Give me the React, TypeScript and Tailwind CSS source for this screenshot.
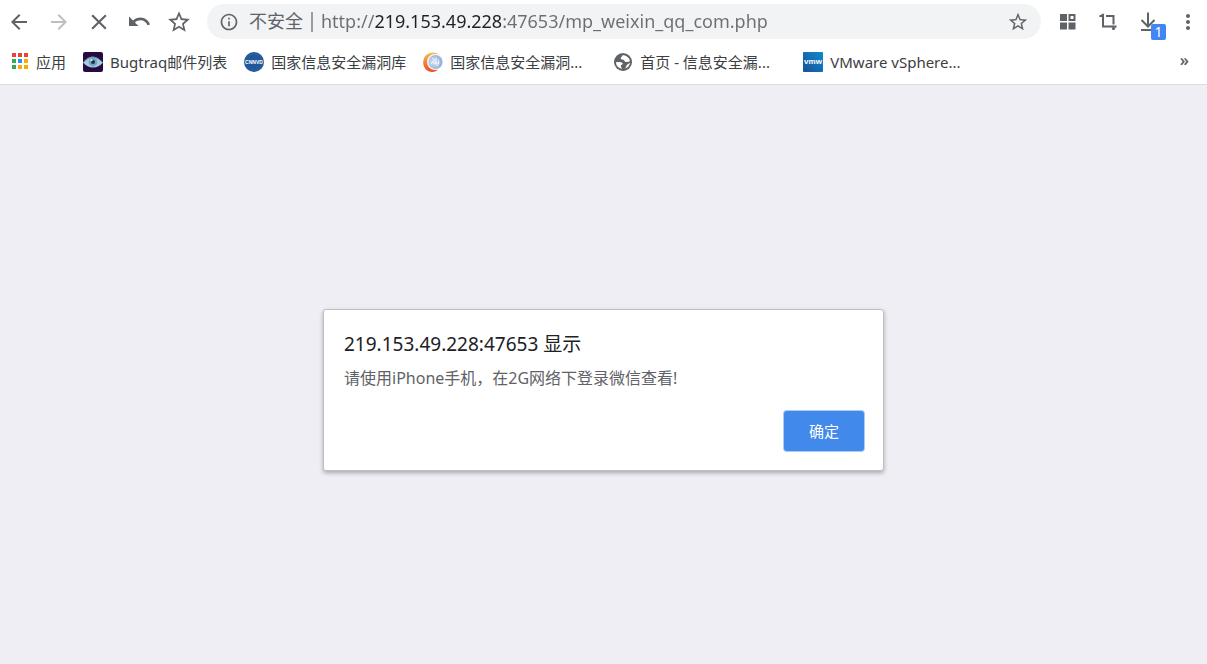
import React, { useState } from 'react';
import {
  MdArrowBack,
  MdArrowForward,
  MdClose,
  MdInfoOutline,
  MdMoreVert,
  MdStarBorder,
} from 'react-icons/md';

interface Bookmark {
  title: string;
  icon: React.ReactNode;
  wide?: boolean;
}

const APP_COLORS = ['#ea4335', '#ea4335', '#ea4335', '#34a853', '#2196f3', '#fbaa05', '#34a853', '#fbaa05', '#fbaa05'];

const AppsIcon = () => (
  <svg width="20" height="20" viewBox="0 0 20 20">
    {APP_COLORS.map((color, i) => (
      <rect key={i} x={2 + (i % 3) * 6} y={1 + Math.floor(i / 3) * 6} width="4" height="4" fill={color} />
    ))}
  </svg>
);

const EyeIcon = () => (
  <svg width="20" height="20" viewBox="0 0 20 20">
    <rect width="20" height="20" rx="2" fill="#260b42" />
    <path d="M0 10.5C4 5.5 7 4.5 10.5 4.8c3.500 .3 6 2.400 9.500 5.700-3 3.500-6 5-10 5S3 14 0 10.500z" fill="#a9cbd9" />
    <path d="M1 9.800C5 5.800 8 5 10.500 5.200c3 .2 5.500 1.800 8.500 4.600" fill="none" stroke="#5c8296" strokeWidth="1" />
    <circle cx="10" cy="10" r="4.400" fill="#6fa5be" />
    <circle cx="10" cy="10" r="2" fill="#163445" />
    <circle cx="8.500" cy="8.300" r="1" fill="#eef8fb" />
  </svg>
);

const CnnvdIcon = () => (
  <svg width="20" height="20" viewBox="0 0 20 20">
    <circle cx="10" cy="10" r="10" fill="#1f5799" />
    <circle cx="10" cy="10" r="8" fill="none" stroke="#3d70aa" strokeWidth="1" strokeDasharray="1 1" />
    <text x="10" y="12" textAnchor="middle" fontSize="5" fontWeight="700" fill="#fff" fontFamily="Liberation Sans, sans-serif">CNNVD</text>
  </svg>
);

const SwirlIcon = () => (
  <svg width="20" height="20" viewBox="0 0 20 20">
    <defs>
      <linearGradient id="swirl" x1="0" y1="0" x2="0" y2="1">
        <stop offset="0" stopColor="#f9c04a" />
        <stop offset="1" stopColor="#e94e24" />
      </linearGradient>
      <radialGradient id="globe" cx=".35" cy=".5" r=".7">
        <stop offset="0" stopColor="#d3deef" />
        <stop offset="1" stopColor="#8aa8d4" />
      </radialGradient>
    </defs>
    <path d="M17 3.500C13-1 5-.5 1.500 5-1 10 0 16 5 19c4 1.800 8 1 10-1.500C7 18 2 8 9 3c3-1.500 6-1 8 .5z" fill="url(#swirl)" />
    <circle cx="12" cy="10" r="8" fill="#f4f6fb" />
    <circle cx="12.500" cy="10" r="7" fill="url(#globe)" />
    <path d="M9 6.500c2 0 3 1 2 2.500s-3 1-2.500 3M13 5.500v8M10 11h6M15 7.500c1.500 2 1 5-1 6.500" fill="none" stroke="#f7f9fd" strokeWidth="1" />
  </svg>
);

const GlobeIcon = () => (
  <svg width="20" height="20" viewBox="0 0 20 20">
    <circle cx="10" cy="10" r="9" fill="#5f6368" />
    <path d="M3 10.300c2-.5 5-.6 6.300.4 1.200 1-.1 2-1.300 2.200-.6 1.500.4 2 1 3.800C5.500 16.300 3 13.800 3 10.300z" fill="#fff" />
    <path d="M9.500 3.200C13 3 16.500 5.500 17 9c-1.300.9-3.200 1.400-4.700.8-1.300-.6-.5-1.600-2-2C8.700 7.500 7.500 7.300 7.700 6c.1-1 1.300-1 1.800-2.800z" fill="#fff" />
    <path d="M17 10.500c-.3 3-2.200 5.500-5.300 6.200 1.700-1.300 1.100-2.300 2-3.500.8-1.100 2.200-1.500 3.300-2.700z" fill="#fff" />
  </svg>
);

const VmwareIcon = () => (
  <svg width="20" height="20" viewBox="0 0 20 20">
    <defs>
      <linearGradient id="vmw" x1="1" y1="0" x2="0" y2="1">
        <stop offset="0" stopColor="#0a8ccf" />
        <stop offset="1" stopColor="#1c4f96" />
      </linearGradient>
    </defs>
    <rect width="20" height="20" rx="1" fill="url(#vmw)" />
    <text x="10" y="12" textAnchor="middle" fontSize="8" fontWeight="700" fill="#fff" fontFamily="Liberation Sans, sans-serif">vmw</text>
  </svg>
);

const UndoIcon = () => (
  <svg width="24" height="24" viewBox="0 0 24 24" fill="currentColor">
    <path d="M2 6.500v9.500h9.500l-3.600-3.600C9.400 11 11.300 10.200 13.500 10.200c3.400 0 6 2.100 7 5l2.500-.8C21.700 10.400 18 7.500 13.500 7.500c-2.900 0-5.500 1.100-7.500 2.900z" />
  </svg>
);

const TilesIcon = () => (
  <svg width="24" height="24" viewBox="0 0 24 24" fill="currentColor">
    <path d="M4 4h7v7H4zM4 12.500h7v7H4zM12.500 12.500h7v7h-7z" />
    <path d="M12.500 4h7v7h-7zM14.500 6v3h3V6z" fillRule="evenodd" />
  </svg>
);

const CropIcon = () => (
  <svg width="24" height="24" viewBox="0 0 24 24" fill="none" stroke="currentColor" strokeWidth="2">
    <path d="M7 4v12.500h13.500M3.500 6H7M10 6h7.500v8.500M17.500 16v4" />
    <path d="M4 6.500l3-3M16 17.500l1.500 2.500 2-2.500" strokeWidth="1" />
  </svg>
);

const DownloadIcon = () => (
  <svg width="24" height="24" viewBox="0 0 24 24" fill="none" stroke="currentColor" strokeWidth="2">
    <path d="M12 2.500V16M5.500 10l6.500 6.500 6.500-6.500M5 20h14" />
  </svg>
);

const BOOKMARKS: Bookmark[] = [
  { title: 'Bugtraq邮件列表', icon: <EyeIcon /> },
  { title: '国家信息安全漏洞库', icon: <CnnvdIcon /> },
  { title: '国家信息安全漏洞...', icon: <SwirlIcon />, wide: true },
  { title: '首页 - 信息安全漏...', icon: <GlobeIcon />, wide: true },
  { title: 'VMware vSphere...', icon: <VmwareIcon />, wide: true },
];

interface ToolButtonProps {
  label: string;
  disabled?: boolean;
  children: React.ReactNode;
}

const ToolButton: React.FC<ToolButtonProps> = ({ label, disabled, children }) => (
  <button
    aria-label={label}
    disabled={disabled}
    className="relative flex h-9 w-[38px] shrink-0 items-center justify-center text-[#5f6368] disabled:text-[#bdbfc1]"
  >
    {children}
  </button>
);

const Toolbar = () => {
  const [url, setUrl] = useState('http://219.153.49.228:47653/mp_weixin_qq_com.php');

  return (
    <div className="flex h-[43px] items-center">
      <div className="flex gap-0.5">
        <ToolButton label="后退"><MdArrowBack size={24} /></ToolButton>
        <ToolButton label="前进" disabled><MdArrowForward size={24} /></ToolButton>
        <ToolButton label="停止"><MdClose size={26} /></ToolButton>
        <ToolButton label="撤销"><UndoIcon /></ToolButton>
        <ToolButton label="收藏"><MdStarBorder size={26} /></ToolButton>
      </div>

      <div className="ml-[9px] mr-2 flex h-[35px] min-w-0 flex-1 items-center rounded-full bg-[#f1f3f4] pl-3 pr-3 text-[#5f6368]">
        <MdInfoOutline size={20} className="shrink-0" />
        <label htmlFor="address" className="ml-2.5 shrink-0 text-[18px]">不安全</label>
        <span className="mx-2 h-5 w-0.5 shrink-0 bg-[#9a9da0]" />
        <input
          id="address"
          type="text"
          value={url}
          onChange={(e) => setUrl(e.target.value)}
          className="min-w-0 flex-1 bg-[linear-gradient(90deg,#6b6f73_54px,#202124_54px,#202124_182px,#6b6f73_182px)] bg-clip-text text-[18px] text-transparent outline-none"
        />
        <button aria-label="为此网页添加书签" className="shrink-0"><MdStarBorder size={22} /></button>
      </div>

      <div className="flex gap-0.5">
        <ToolButton label="扩展程序"><TilesIcon /></ToolButton>
        <ToolButton label="截图"><CropIcon /></ToolButton>
        <ToolButton label="下载">
          <DownloadIcon />
          <span className="absolute bottom-0 right-px flex h-4 w-[15px] items-center justify-center rounded-xs bg-[#4285f4] text-sm text-white">1</span>
        </ToolButton>
        <ToolButton label="菜单"><MdMoreVert size={24} /></ToolButton>
      </div>
    </div>
  );
};

const BookmarkBar = () => (
  <nav className="flex h-[38px] items-center gap-[17px] pl-2.5 pr-[18px] text-[15px] text-[#3c4043]">
    <a href="#apps" className="flex shrink-0 items-center gap-1.5">
      <AppsIcon />
      应用
    </a>
    {BOOKMARKS.map((bookmark) => (
      <a key={bookmark.title} href="#bookmark" className="flex shrink-0 items-center gap-[7px] whitespace-nowrap">
        {bookmark.icon}
        <span className={bookmark.wide ? 'w-[146px]' : ''}>{bookmark.title}</span>
      </a>
    ))}
    <button aria-label="更多书签" className="ml-auto pb-1 text-base font-semibold text-[#5f6368]">»</button>
  </nav>
);

const App: React.FC = () => {
  const [isOpen, setIsOpen] = useState(true);

  return (
    <div className="flex min-h-screen flex-col bg-[#efeef5] font-['Noto_Sans','Noto_Sans_CJK_SC',sans-serif]">
      <header className="border-b border-[#dadce0] bg-white pb-[3px]">
        <Toolbar />
        <BookmarkBar />
      </header>

      <main className="flex flex-1 items-start justify-center pt-56">
        {isOpen && (
          <div
            role="alertdialog"
            aria-labelledby="alert-title"
            aria-describedby="alert-text"
            className="flex w-full max-w-[561px] flex-col rounded-[3px] border border-[#bfbfc4] bg-white pb-[19px] pl-5 pr-[19px] pt-5 shadow-[0_2px_4px_rgba(0,0,0,0.3)]"
          >
            <h1 id="alert-title" className="text-[19px] leading-7 text-[#202124]">219.153.49.228:47653 显示</h1>
            <p id="alert-text" className="mt-2 text-base leading-6 text-[#5f6368]">请使用iPhone手机，在2G网络下登录微信查看!</p>
            <button
              onClick={() => setIsOpen(false)}
              className="mt-[21px] h-10 w-20 self-end rounded-[3px] bg-[#4189eb] text-[15px] text-white ring-1 ring-[#a9cbf8]"
            >
              确定
            </button>
          </div>
        )}
      </main>
    </div>
  );
};

export default App;
